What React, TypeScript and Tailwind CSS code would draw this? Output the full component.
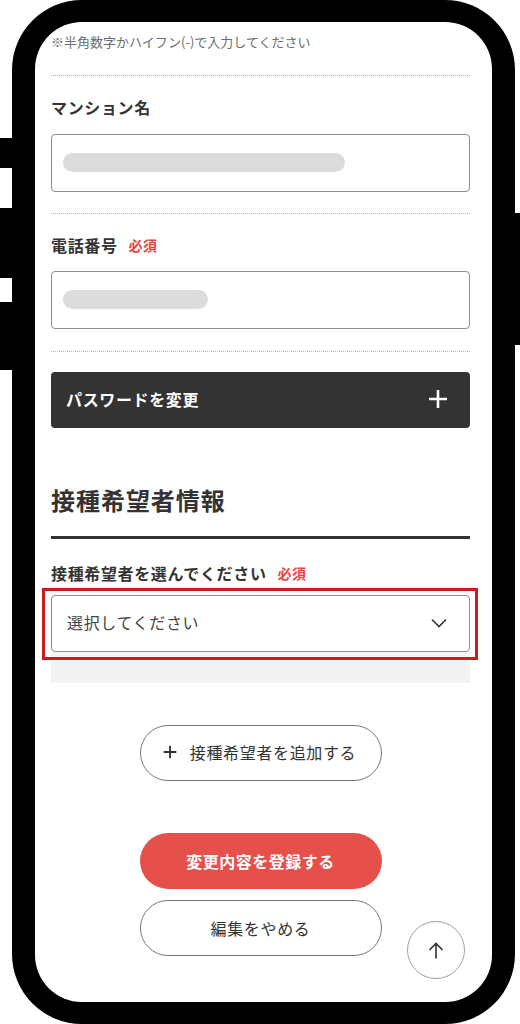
import { ReactNode } from 'react';

const font = "font-['Noto_Sans_CJK_JP','Noto_Sans',sans-serif]";

function Required() {
  return <span className="ml-[11px] text-[14px] font-bold tracking-[0.03em] text-[#e8463f]">必須</span>;
}

function Label({ children, required }: { children: ReactNode; required?: boolean }) {
  return (
    <div className="flex items-center text-[16px] leading-[24px] font-bold tracking-[0.04em] text-[#333]">
      {children}
      {required && <Required />}
    </div>
  );
}

function Dotted({ className }: { className: string }) {
  return <div className={`border-t border-dotted border-[#b8b8b8] ${className}`} />;
}

function MaskedInput({ barWidth, className }: { barWidth: string; className: string }) {
  return (
    <div className={`h-[58px] rounded-[4px] border border-[#8e8e8e] bg-white pl-[11px] pt-[18px] ${className}`}>
      <div className={`h-[19px] rounded-full bg-[#dcdcdc] ${barWidth}`} />
    </div>
  );
}

function PlusIcon({ size, stroke, color }: { size: number; stroke: number; color: string }) {
  return (
    <svg width={size} height={size} viewBox="0 0 20 20" fill="none">
      <path d="M10 1V19M1 10H19" stroke={color} strokeWidth={stroke} />
    </svg>
  );
}

export default function App() {
  return (
    <div className={`flex h-[1024px] w-[520px] items-start overflow-hidden bg-white ${font}`}>
      {/* left side keys */}
      <div className="flex w-[12px] shrink-0 flex-col">
        <div className="mt-[138px] h-[30px] bg-black" />
        <div className="mt-[40px] h-[70px] bg-black" />
        <div className="mt-[24px] h-[68px] bg-black" />
      </div>

      {/* phone body */}
      <div className="h-[1024px] w-[503px] shrink-0 rounded-[70px] bg-black px-[23px] py-[22px]">
        <div className="relative h-full overflow-hidden rounded-[47px] bg-white pl-[16px] pr-[22px] pt-[10px]">
          <p className="text-[13px] leading-[20px] text-[#6b6b6b]">※半角数字かハイフン(-)で入力してください</p>
          <Dotted className="mt-[23px]" />

          <div className="mt-[19px]">
            <Label>マンション名</Label>
          </div>
          <MaskedInput barWidth="w-[282px]" className="mt-[15px]" />
          <Dotted className="mt-[21px]" />

          <div className="mt-[19px]">
            <Label required>電話番号</Label>
          </div>
          <MaskedInput barWidth="w-[145px]" className="mt-[14px]" />
          <Dotted className="mt-[22px]" />

          <button className="mt-[20px] flex h-[56px] w-full items-center justify-between rounded-[4px] bg-[#333] pb-[2px] pl-[15px] pr-[22px] text-[16px] leading-[24px] font-bold tracking-[0.04em] text-white">
            パスワードを変更
            <PlusIcon size={20} stroke={2.6} color="#fff" />
          </button>

          <h2 className="mt-[56px] text-[24px] leading-[32px] font-bold tracking-[0.04em] text-[#333]">接種希望者情報</h2>
          <div className="mt-[20px] h-[3px] bg-[#333]" />

          <div className="mt-[22px]">
            <Label required>接種希望者を選んでください</Label>
          </div>
          <div className="relative mt-[10px]">
            <div className="flex h-[57px] items-center justify-between rounded-[4px] border border-[#8e8e8e] bg-white pb-[3px] pl-[15px] pr-[22px]">
              <span className="text-[16px] leading-[24px] tracking-[0.04em] text-[#444]">選択してください</span>
              <svg width="16" height="10" viewBox="0 0 16 10" fill="none" className="mt-[2px]">
                <path d="M1 1.5L8 8.5L15 1.5" stroke="#333" strokeWidth="1.6" />
              </svg>
            </div>
            {/* annotation highlight */}
            <div className="pointer-events-none absolute -bottom-[8px] -left-[9px] -right-[8px] -top-[7px] border-[3px] border-[#cc1b1f]" />
          </div>
          <div className="h-[31px] bg-[#f3f3f3]" />

          <div className="flex flex-col items-center">
            <button className="mt-[42px] flex h-[56px] w-[242px] items-center justify-center gap-[13px] rounded-full border border-[#777] bg-white pb-[2px] pr-[2px] text-[16px] leading-[24px] tracking-[0.04em] text-[#333]">
              <PlusIcon size={14} stroke={2.6} color="#333" />
              接種希望者を追加する
            </button>
            <button className="mt-[52px] flex h-[56px] w-[242px] items-center justify-center rounded-full bg-[#e6504a] pb-[1px] text-[16px] leading-[24px] font-bold tracking-[0.03em] text-white">
              変更内容を登録する
            </button>
            <button className="mt-[11px] flex h-[56px] w-[242px] items-center justify-center rounded-full border border-[#777] bg-white pb-[1px] text-[16px] leading-[24px] tracking-[0.04em] text-[#333]">
              編集をやめる
            </button>
          </div>

          <button className="absolute bottom-[23px] right-[27px] flex h-[58px] w-[58px] items-center justify-center rounded-full border border-[#a0a0a0] bg-white">
            <svg width="16" height="17" viewBox="0 0 16 17" fill="none">
              <path d="M8 1.5V16.5M1.5 8L8 1.5L14.5 8" stroke="#333" strokeWidth="1.6" />
            </svg>
          </button>
        </div>
      </div>

      {/* right side key */}
      <div className="w-[5px] shrink-0">
        <div className="mt-[213px] h-[132px] bg-black" />
      </div>
    </div>
  );
}
